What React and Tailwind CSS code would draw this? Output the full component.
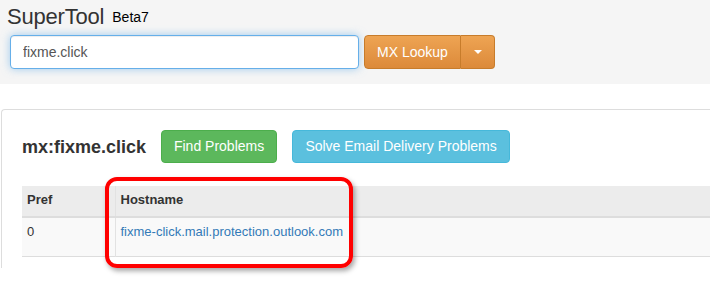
const font = { fontFamily: '"Liberation Sans", Arial, sans-serif' }

export default function App() {
  return (
    <div className="relative w-[710px] h-[283px] overflow-hidden bg-white text-[#333]" style={font}>
      <div className="h-[84px] bg-[#f5f5f5] pl-[7px] pt-[4px]">
        <div className="flex items-start">
          <span className="text-[22px] leading-[26px] tracking-[-0.2px] text-[#333]">SuperTool</span>
          <span className="ml-[8px] mt-[5px] text-[14px] leading-[16px] text-black">Beta7</span>
        </div>
        <div className="mt-[5px] ml-[3px] flex items-center">
          <input
            type="text"
            defaultValue="fixme.click"
            className="w-[349px] h-[34px] rounded-[4px] border border-[#66afe9] bg-white px-[12px] text-[14px] text-[#555] outline-none shadow-[inset_0_1px_1px_rgba(0,0,0,0.075),0_0_8px_rgba(102,175,233,0.6)]"
          />
          <div className="ml-[5px] flex h-[34px]">
            <button className="w-[97px] rounded-l-[4px] border border-[#c77c2b] bg-gradient-to-b from-[#eea453] to-[#dc8a3a] text-[14px] text-white">
              MX Lookup
            </button>
            <button className="flex w-[34px] items-center justify-center rounded-r-[4px] border border-l-0 border-[#c77c2b] bg-gradient-to-b from-[#eea453] to-[#dc8a3a]">
              <span className="h-0 w-0 border-x-[4px] border-t-[4px] border-x-transparent border-t-white"></span>
            </button>
          </div>
        </div>
      </div>

      <div className="pt-[25px] pl-[1px]">
        <div className="w-[740px] h-[159px] rounded-tl-[4px] border-l border-t border-[#ddd] pl-[20px] pt-[20px]">
          <div className="flex items-center">
            <h2 className="text-[18px] font-bold leading-[20px] text-[#333]">mx:fixme.click</h2>
            <button className="ml-[15px] h-[33px] w-[116px] rounded-[4px] border border-[#4cae4c] bg-[#5cb85c] text-[14px] text-white">
              Find Problems
            </button>
            <button className="ml-[15px] h-[33px] w-[218px] rounded-[4px] border border-[#46b8da] bg-[#5bc0de] text-[14px] text-white">
              Solve Email Delivery Problems
            </button>
          </div>

          <table className="mt-[23px] w-[700px] border-collapse text-[13px]">
            <thead>
              <tr className="h-[31px] bg-[#ececec] border-b-2 border-[#ddd]">
                <th className="w-[93px] px-[5px] pt-[5px] pb-[6px] text-left align-top font-bold leading-[18px]">Pref</th>
                <th className="border-l border-[#e2e2e2] px-[5px] pt-[5px] pb-[6px] text-left align-top font-bold leading-[18px]">Hostname</th>
              </tr>
            </thead>
            <tbody>
              <tr className="h-[39px] bg-[#f9f9f9] border-b border-[#ddd]">
                <td className="px-[5px] pt-[5px] align-top leading-[18px]">0</td>
                <td className="border-l border-[#e2e2e2] px-[5px] pt-[5px] align-top leading-[18px]">
                  <a href="#" className="text-[#337ab7]">fixme-click.mail.protection.outlook.com</a>
                </td>
              </tr>
            </tbody>
          </table>
        </div>
      </div>

      <div className="absolute left-[105px] top-[177px] h-[91px] w-[248px] rounded-[12px] border-[4px] border-[#ff0000] shadow-[2px_3px_5px_rgba(0,0,0,0.35)]"></div>
    </div>
  )
}
